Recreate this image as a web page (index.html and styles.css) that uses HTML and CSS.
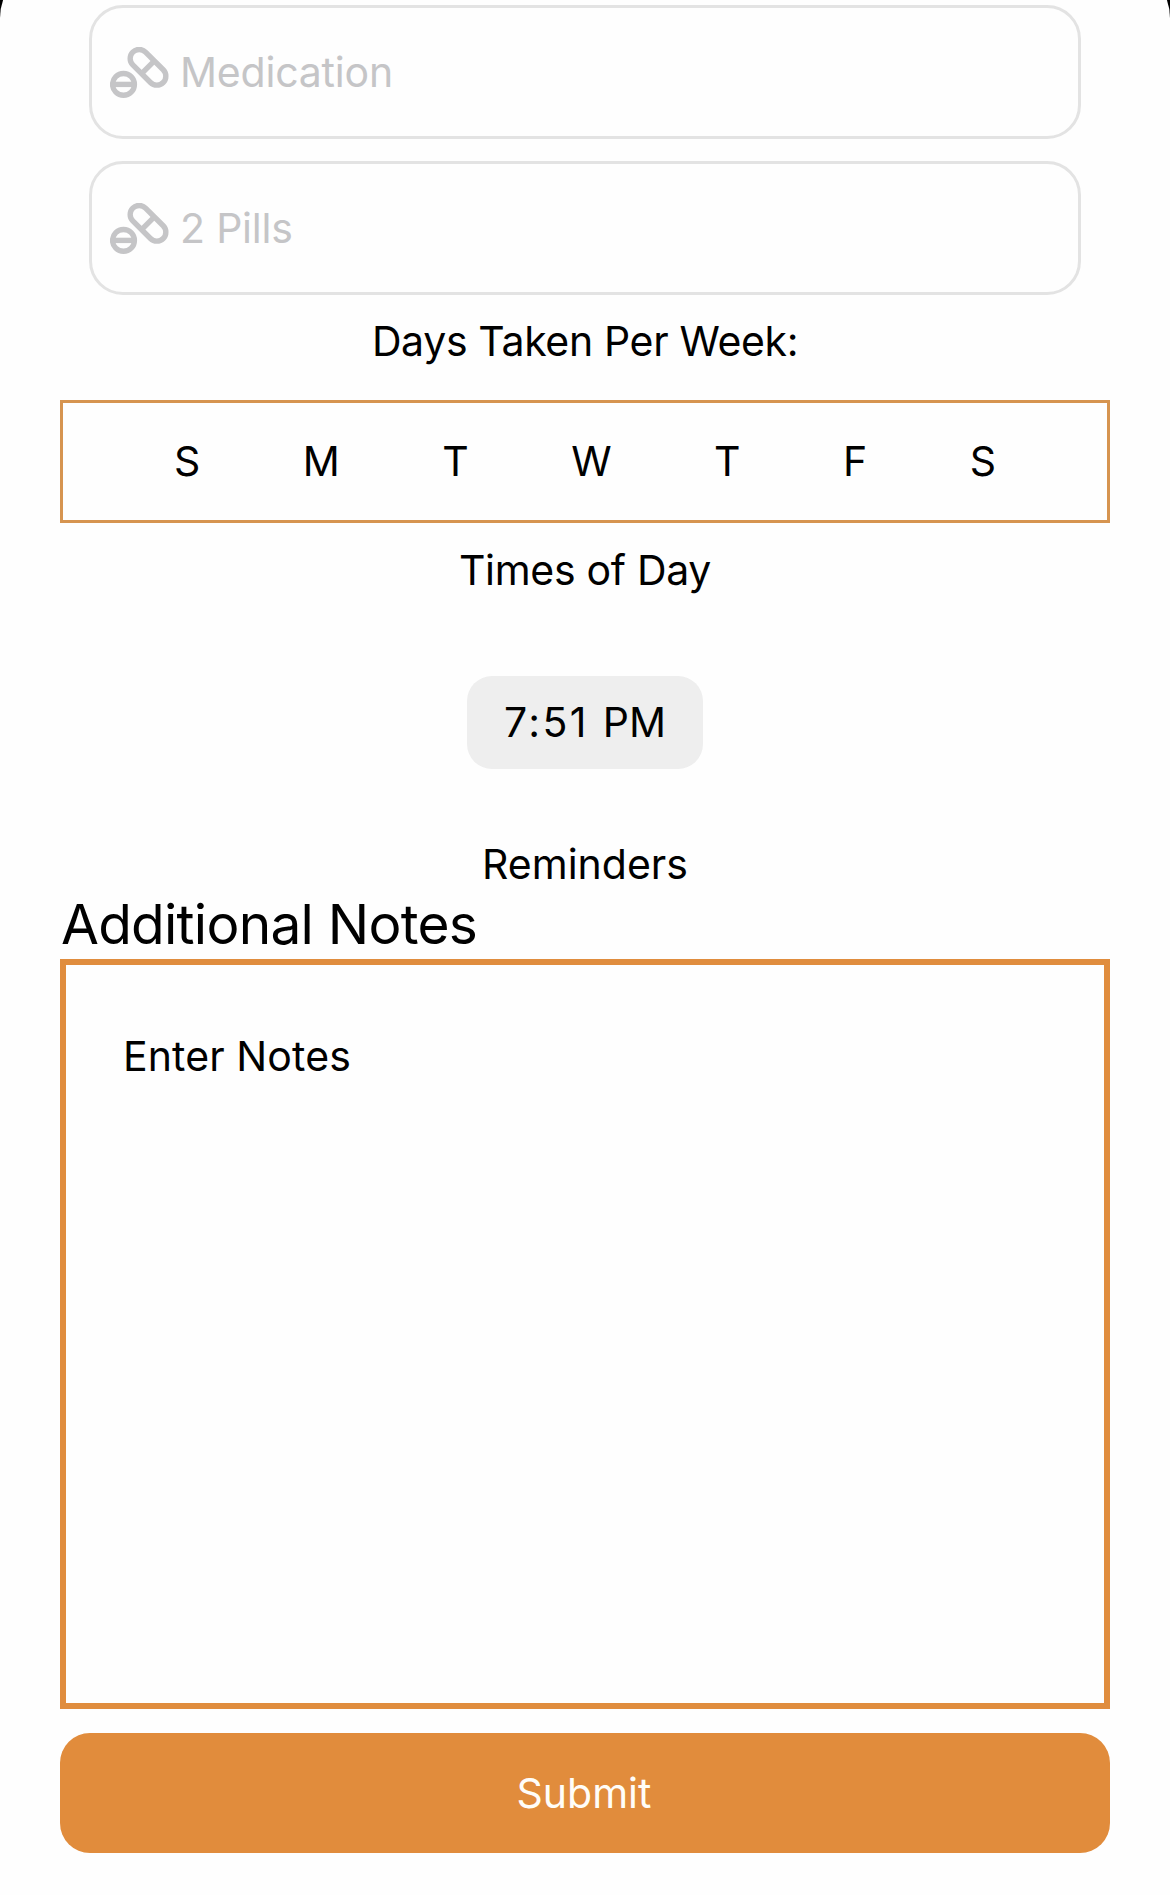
FILE: index.html
```html
<!DOCTYPE html>
<html lang="en">
<head>
<meta charset="utf-8">
<title>Add Medication</title>
<link rel="stylesheet" href="styles.css">
</head>
<body>
<svg class="defs" aria-hidden="true">
  <symbol id="pills" viewBox="0 0 59 51">
    <g fill="none" stroke="currentColor" stroke-width="5.4">
      <circle cx="13.5" cy="37.4" r="10.9"/>
      <path d="M5 37.4H22"/>
      <g transform="rotate(45 38 20.3)">
        <rect x="16.5" y="11.3" width="43" height="18" rx="9"/>
        <path d="M38 12V29"/>
      </g>
    </g>
  </symbol>
</svg>
<main class="sheet">
  <div class="field"><svg class="icon"><use href="#pills"/></svg><span class="hint">Medication</span></div>
  <div class="field"><svg class="icon"><use href="#pills"/></svg><span class="hint">2 Pills</span></div>
  <h2 class="label label-days">Days Taken Per Week:</h2>
  <div class="days">
    <span>S</span><span>M</span><span>T</span><span>W</span><span>T</span><span>F</span><span>S</span>
  </div>
  <h2 class="label label-times">Times of Day</h2>
  <div class="time"><p class="clock"><span class="digits">7:51 </span>PM</p></div>
  <h2 class="label label-reminders">Reminders</h2>
  <h1 class="title">Additional Notes</h1>
  <div class="notes">Enter Notes</div>
  <button class="submit">Submit</button>
</main>
</body>
</html>
```
FILE: styles.css
```css
* {
  box-sizing: border-box;
}

body {
  margin: 0;
  height: 1895px;
  overflow: hidden;
  background: #000;
  color: #000;
  font: 400 41px/50px Inter, "Liberation Sans", sans-serif;
}

.defs {
  display: none;
}

.sheet {
  display: flex;
  flex-direction: column;
  height: 1931px;
  margin-top: -36px;
  padding: 41px 60px 0;
  border-radius: 54px 54px 0 0;
  background: #fefefe;
}

.field {
  display: flex;
  align-items: center;
  height: 134px;
  margin: 0 29px 22px;
  padding-left: 18px;
  border: 3px solid #e3e3e3;
  border-radius: 34px;
  color: #c5c5c7;
}

.icon {
  width: 59px;
  height: 51px;
}

.hint {
  margin-left: 11px;
  letter-spacing: -0.2px;
}

.label {
  align-self: center;
  margin: 0;
  font: inherit;
  white-space: nowrap;
}

.label-days {
  margin-top: -1px;
  letter-spacing: -0.35px;
}

.days {
  display: flex;
  justify-content: space-between;
  align-items: center;
  height: 123px;
  margin-top: 34px;
  padding: 0 111px 2px;
  border: 3px solid #d69450;
}

.label-times {
  margin-top: 22px;
  letter-spacing: -0.3px;
}

.time {
  display: flex;
  align-items: center;
  justify-content: center;
  align-self: center;
  width: 236px;
  height: 93px;
  margin-top: 81px;
  padding-bottom: 2px;
  border-radius: 25px;
  background: #eee;
}

.clock {
  margin: 0;
}

.digits {
  letter-spacing: 2.4px;
}

.label-reminders {
  margin-top: 70px;
}

.title {
  margin: 2px 0 2px 1px;
  font-size: 55px;
  font-weight: 400;
  line-height: 66px;
  letter-spacing: -0.75px;
}

.notes {
  height: 750px;
  padding: 66px 0 0 57px;
  border: 6px solid #e08d3e;
  letter-spacing: 0.1px;
}

.submit {
  height: 120px;
  margin-top: 24px;
  padding: 0 2px 0 0;
  border: 0;
  border-radius: 30px;
  background: #e18c3c;
  color: #fffdf8;
  font: inherit;
}
```
